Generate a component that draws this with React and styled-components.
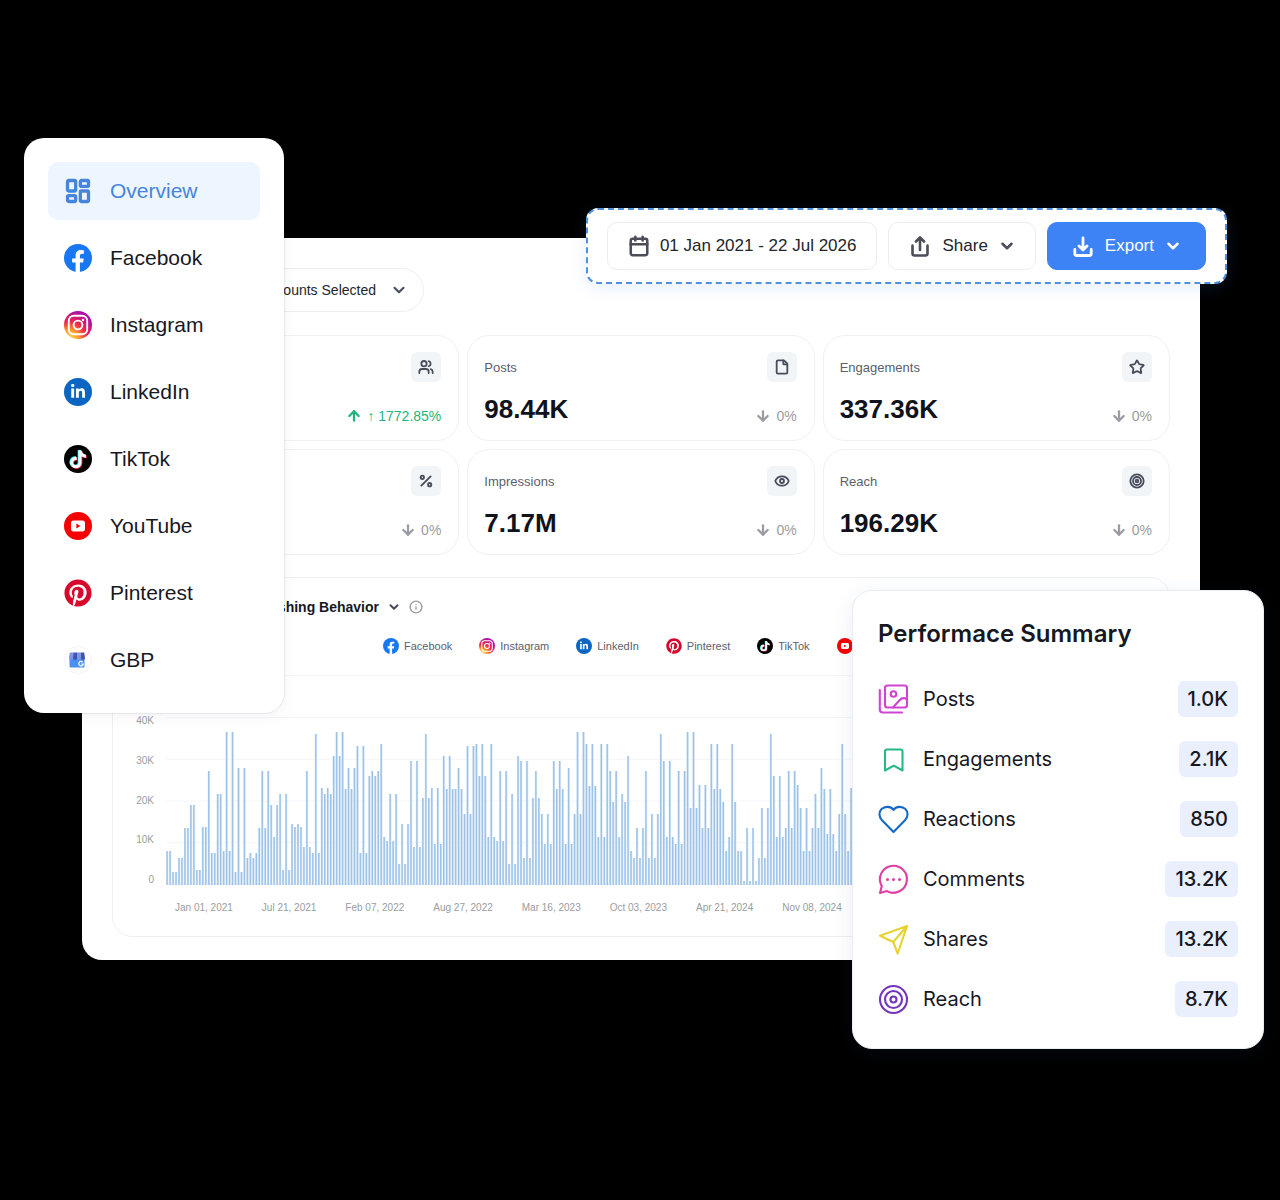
import React from 'react';
import styled, { createGlobalStyle, css } from 'styled-components';
import {
  ArrowDown,
  ArrowUp,
  Calendar,
  ChevronDown,
  Eye,
  File,
  Info,
  LayoutDashboard,
  Percent,
  Star,
  Target,
  Users,
} from 'lucide-react';
import { FaFacebookF, FaLinkedinIn, FaPinterest, FaTiktok } from 'react-icons/fa';

const GlobalStyle = createGlobalStyle`
  * { box-sizing: border-box; }
  body {
    margin: 0;
    background: #000;
    color: #17181f;
    font-family: 'Liberation Sans', Arial, sans-serif;
  }
  button { font-family: inherit; cursor: pointer; }
  svg { display: block; flex-shrink: 0; }
`;

const Page = styled.main`
  position: relative;
  padding: 238px 80px 240px 82px;
  overflow: hidden;
`;

const Dashboard = styled.section`
  padding: 30px 30px 23px;
  background: #fff;
  border-radius: 20px;
`;

const AccountSelect = styled.button`
  display: flex;
  align-items: center;
  justify-content: flex-end;
  gap: 14px;
  width: 312px;
  height: 44px;
  padding: 0 15px;
  border: 1px solid #eeeff1;
  border-radius: 22px;
  background: #fff;
  color: #23252d;
  font-size: 14px;
`;

const StatGrid = styled.div`
  display: grid;
  grid-template-columns: repeat(3, 1fr);
  gap: 8px;
  margin: 23px 0 22px;
`;

const StatCard = styled.article`
  display: flex;
  flex-direction: column;
  gap: 12px;
  padding: 16px 17px 16px 16px;
  border: 1px solid #f0f1f3;
  border-radius: 22px;
`;

const StatRow = styled.div`
  display: flex;
  align-items: ${(p) => p.$align || 'center'};
  justify-content: space-between;
  height: 30px;
`;

const StatLabel = styled.span`
  color: #5b606b;
  font-size: 13px;
`;

const StatValue = styled.strong`
  color: #10121c;
  font-size: 26px;
  line-height: 30px;
`;

const IconTile = styled.span`
  display: grid;
  place-items: center;
  width: 30px;
  height: 30px;
  border-radius: 6px;
  background: #f2f5f8;
  color: #474c5a;
`;

const Delta = styled.span`
  display: flex;
  align-items: center;
  gap: 5px;
  color: ${(p) => (p.$up ? '#1fb57c' : '#9a9ca2')};
  font-size: 14px;
  line-height: 16px;
`;

const ChartCard = styled.section`
  padding: 19px 0 21px;
  border: 1px solid #eeeff1;
  border-radius: 20px;
  overflow: hidden;
`;

const ChartHead = styled.div`
  display: flex;
  align-items: center;
  justify-content: flex-end;
  gap: 8px;
  width: 310px;
  height: 20px;
  color: #474c5a;
`;

const ChartTitle = styled.h2`
  margin: 0;
  color: #17181f;
  font-size: 14px;
  line-height: 20px;
`;

const Legend = styled.ul`
  display: flex;
  gap: 27px;
  margin: 20px 17px 0;
  padding: 0 0 20px 253px;
  border-bottom: 1px solid #f5f6f7;
  list-style: none;
`;

const LegendItem = styled.li`
  display: flex;
  align-items: center;
  gap: 5px;
  height: 18px;
  color: #5b606b;
  font-size: 11px;
`;

const PlotRow = styled.div`
  display: flex;
  gap: 12px;
  padding: 38px 17px 0 0;
`;

const YAxis = styled.div`
  display: flex;
  flex-direction: column;
  justify-content: space-between;
  width: 41px;
  height: 173px;
  color: #9a9ca2;
  font-size: 10px;
  line-height: 14px;
  text-align: right;
`;

const Plot = styled.svg`
  flex: 1;
  min-width: 0;
  height: 168px;
  margin-top: 3px;
`;

const XAxis = styled.div`
  display: flex;
  gap: 29px;
  margin-top: 14px;
  padding-left: 62px;
  color: #9a9ca2;
  font-size: 10px;
  line-height: 14px;
  white-space: nowrap;
`;

/* floating panels over the dashboard */

const Sidebar = styled.nav`
  position: absolute;
  top: 138px;
  left: 24px;
  display: flex;
  flex-direction: column;
  gap: 9px;
  width: 260px;
  padding: 24px;
  border-radius: 20px;
  background: #fff;
  box-shadow: 0 0 1px 1px rgba(30, 40, 60, 0.08), 0 4px 16px rgba(30, 40, 60, 0.05);
`;

const NavLink = styled.a`
  display: flex;
  align-items: center;
  gap: 18px;
  height: 58px;
  padding: 0 16px;
  border-radius: 10px;
  color: #17181f;
  font-size: 21px;
  text-decoration: none;
  ${(p) =>
    p.$active &&
    css`
      background: #edf5fe;
      color: #4784dc;
    `}
`;

const Toolbar = styled.div`
  position: absolute;
  top: 208px;
  right: 53px;
  display: flex;
  gap: 11px;
  padding: 12px 19px;
  border: 2px dashed #4f91dd;
  border-radius: 12px;
  background: #fff;
  box-shadow: 0 4px 16px rgba(62, 131, 245, 0.13);
`;

const ToolButton = styled.button`
  display: flex;
  align-items: center;
  gap: 10px;
  height: 48px;
  padding: 0 ${(p) => p.$pad || 19}px;
  border: 1px solid #ecedef;
  border-radius: 10px;
  background: #fff;
  color: #23252d;
  font-size: 17px;
  white-space: nowrap;
  svg { color: #4b4d57; }
  ${(p) =>
    p.$primary &&
    css`
      border-color: #3e83f5;
      background: #3e83f5;
      color: #fff;
      svg { color: #fff; }
    `}
`;

const Summary = styled.aside`
  position: absolute;
  top: 590px;
  right: 16px;
  width: 412px;
  padding: 28px 25px 31px;
  border: 1px solid #e9edf4;
  border-radius: 20px;
  background: #fff;
  box-shadow: 0 4px 20px rgba(50, 90, 170, 0.1);
  font-family: Inter, sans-serif;
`;

const SummaryTitle = styled.h2`
  margin: 0 0 32px;
  font-size: 24px;
  font-weight: 600;
  line-height: 30px;
`;

const SummaryList = styled.ul`
  display: flex;
  flex-direction: column;
  gap: 24px;
  margin: 0;
  padding: 0;
  list-style: none;
`;

const SummaryItem = styled.li`
  display: flex;
  align-items: center;
  gap: 15px;
  height: 36px;
  font-size: 20px;
`;

const Badge = styled.span`
  margin-left: auto;
  padding: 0 10px;
  border-radius: 6px;
  background: #e9effd;
  font-weight: 500;
  line-height: 36px;
`;

const brandShapes = {
  Facebook: (
    <>
      <circle cx="14" cy="14" r="14" fill="#1877f2" />
      <FaFacebookF x={3} y={6} size={22} color="#fff" />
    </>
  ),
  Instagram: (
    <>
      <defs>
        <radialGradient id="insta" cx="0.2" cy="1" r="1.1">
          <stop offset="0" stopColor="#ffdd55" />
          <stop offset="0.3" stopColor="#ff9a2e" />
          <stop offset="0.55" stopColor="#ee2a4b" />
          <stop offset="0.8" stopColor="#c4128c" />
          <stop offset="1" stopColor="#9b0fb8" />
        </radialGradient>
      </defs>
      <circle cx="14" cy="14" r="14" fill="url(#insta)" />
      <g fill="none" stroke="#fff" strokeWidth="1.9">
        <rect x="4.800" y="4.800" width="18.400" height="18.400" rx="5" />
        <circle cx="14" cy="14" r="4.400" />
      </g>
      <circle cx="19" cy="9" r="1.200" fill="#fff" />
    </>
  ),
  LinkedIn: (
    <>
      <circle cx="14" cy="14" r="14" fill="#0a66c2" />
      <FaLinkedinIn x={6} y={5.8} size={16} color="#fff" />
    </>
  ),
  TikTok: (
    <>
      <circle cx="14" cy="14" r="14" fill="#000" />
      <FaTiktok x={4.2} y={4.7} size={18} color="#25f4ee" />
      <FaTiktok x={5.800} y={5.900} size={18} color="#fe2c55" />
      <FaTiktok x={5} y={5.300} size={18} color="#fff" />
    </>
  ),
  YouTube: (
    <>
      <circle cx="14" cy="14" r="14" fill="#f60002" />
      <rect x="7" y="8.600" width="14" height="10.800" rx="2.600" fill="#fff" />
      <path d="M12.400 11.600v4.800l4-2.400z" fill="#f60002" />
    </>
  ),
  Pinterest: <FaPinterest size={28} color="#d7082c" />,
  GBP: (
    <>
      <circle cx="14" cy="14" r="13.500" fill="#fff" stroke="#f1f2f4" />
      <path d="M5.500 11h15v9.500a1 1 0 0 1-1 1h-13a1 1 0 0 1-1-1z" fill="#4a90f2" />
      <path d="M5.800 6.500h3.600l-.4 5.500a2 2 0 0 1-4 0z" fill="#7d95e6" />
      <path d="M9.400 6.500H13V12a2 2 0 0 1-4 0z" fill="#4153ad" />
      <path d="M13 6.500h3.600l.4 5.500a2 2 0 0 1-4 0z" fill="#7d95e6" />
      <path d="M16.600 6.500h3.600L21 12a2 2 0 0 1-4 0z" fill="#4153ad" />
      <path d="M18.700 16a2.300 2.300 0 1 0 .6 2h-2.100" fill="none" stroke="#fff" strokeWidth="1.200" />
    </>
  ),
};

const BrandIcon = ({ name, size }) => (
  <svg width={size} height={size} viewBox="0 0 28 28" aria-hidden="true">
    {brandShapes[name]}
  </svg>
);

const LineIcon = ({ size, box = 24, color = 'currentColor', width, children }) => (
  <svg
    width={size}
    height={size}
    viewBox={`0 0 ${box} ${box}`}
    fill="none"
    stroke={color}
    strokeWidth={width}
    strokeLinecap="round"
    strokeLinejoin="round"
    overflow="visible"
    aria-hidden="true"
  >
    {children}
  </svg>
);

const channels = ['Facebook', 'Instagram', 'LinkedIn', 'TikTok', 'YouTube', 'Pinterest', 'GBP'];

const legend = [
  { name: 'Facebook', label: 'Facebook' },
  { name: 'Instagram', label: 'Instagram' },
  { name: 'LinkedIn', label: 'LinkedIn' },
  { name: 'Pinterest', label: 'Pinterest' },
  { name: 'TikTok', label: 'TikTok' },
  { name: 'YouTube' },
];

const stats = [
  { id: 'followers', icon: Users, delta: '↑ 1772.85%', up: true },
  { id: 'posts', label: 'Posts', value: '98.44K', icon: File, delta: '0%' },
  { id: 'engagements', label: 'Engagements', value: '337.36K', icon: Star, delta: '0%' },
  { id: 'rate', icon: Percent, delta: '0%' },
  { id: 'impressions', label: 'Impressions', value: '7.17M', icon: Eye, delta: '0%' },
  { id: 'reach', label: 'Reach', value: '196.29K', icon: Target, delta: '0%' },
];

const yTicks = ['40K', '30K', '20K', '10K', '0'];
const xTicks = [
  'Jan 01, 2021',
  'Jul 21, 2021',
  'Feb 07, 2022',
  'Aug 27, 2022',
  'Mar 16, 2023',
  'Oct 03, 2023',
  'Apr 21, 2024',
  'Nov 08, 2024',
];

// bar heights, 167 is the 40K line
const bars = [
  34, 34, 13, 13, 27, 27, 57, 57, 80, 80, 15, 15, 58, 58, 114, 32, 32, 91, 91, 34,
  153, 34, 153, 13, 117, 13, 117, 27, 32, 27, 32, 57, 114, 57, 114, 80, 48, 80, 91, 15,
  91, 15, 61, 58, 61, 58, 38, 114, 38, 32, 151, 32, 97, 91, 97, 91, 129, 153, 129, 153,
  96, 117, 96, 117, 139, 32, 139, 32, 109, 114, 109, 114, 141, 48, 44, 91, 44, 91, 21, 61,
  21, 61, 124, 38, 124, 38, 87, 151, 87, 97, 41, 97, 41, 129, 96, 129, 96, 96, 117, 96,
  71, 139, 71, 139, 141, 109, 141, 109, 48, 141, 48, 44, 114, 44, 114, 21, 91, 21, 129, 124,
  27, 124, 27, 87, 114, 87, 71, 41, 71, 41, 124, 96, 124, 96, 41, 117, 41, 71, 153, 71,
  153, 141, 99, 141, 99, 48, 141, 48, 141, 114, 83, 114, 48, 91, 83, 129, 34, 27, 57, 27,
  57, 114, 27, 71, 27, 71, 151, 124, 48, 124, 48, 41, 114, 41, 114, 153, 77, 153, 77, 100,
  57, 100, 57, 141, 96, 141, 96, 83, 34, 48, 141, 83, 34, 34, 4, 57, 4, 57, 4, 27,
  77, 27, 77, 151, 109, 48, 109, 48, 57, 114, 57, 114, 100, 77, 34, 77, 34, 57, 91, 57,
  117, 96, 51, 96, 51, 34, 71, 141, 71, 34, 97,
];

const summary = [
  {
    label: 'Posts',
    value: '1.0K',
    color: '#cf45d1',
    shape: (
      <>
        <rect x="7" y="1.500" width="22" height="22" rx="2.500" />
        <path d="M1.800 6v19.500a3 3 0 0 0 3 3H24M15 23.500l6.500-7.200c2.200-2.400 5-2.600 7.500-1" />
        <circle cx="15.500" cy="10" r="2.800" />
      </>
    ),
  },
  {
    label: 'Engagements',
    value: '2.1K',
    color: '#27b888',
    shape: <path d="M7 26.500V7.500a2 2 0 0 1 2-2h13.500a2 2 0 0 1 2 2v19l-8.700-4.800z" />,
  },
  {
    label: 'Reactions',
    value: '850',
    color: '#1668c8',
    shape: (
      <path d="M15.500 28 4 16.300C.8 12.800.6 8.100 3.600 5.100c3.400-3.300 9.300-2.900 11.900.7 2.600-3.600 8.500-4 11.900-.7 3 3 2.800 7.700-.4 11.200z" />
    ),
  },
  {
    label: 'Comments',
    value: '13.2K',
    color: '#df3fa2',
    shape: (
      <>
        <path d="M3.800 22.100A13.500 13.500 0 1 1 9 27.100L2 29z" />
        <path d="M9.500 15.500h.01M15.500 15.500h.01M21.500 15.500h.01" strokeWidth="3" />
      </>
    ),
  },
  {
    label: 'Shares',
    value: '13.2K',
    color: '#e8d22f',
    shape: <path d="M29 2 2 11.700l13.300 6.300L19.700 29.500zL15.300 18" />,
  },
  {
    label: 'Reach',
    value: '8.7K',
    color: '#7335c0',
    shape: (
      <>
        <circle cx="15.500" cy="15.500" r="13.500" />
        <circle cx="15.500" cy="15.500" r="8.500" />
        <circle cx="15.500" cy="15.500" r="3" />
      </>
    ),
  },
];

const Stat = ({ label, value, icon: Icon, delta, up }) => (
  <StatCard>
    <StatRow>
      <StatLabel>{label}</StatLabel>
      <IconTile>
        <Icon size={16} strokeWidth={2.7} />
      </IconTile>
    </StatRow>
    <StatRow $align="flex-end">
      <StatValue>{value}</StatValue>
      <Delta $up={up}>
        {up ? <ArrowUp size={16} strokeWidth={3.4} /> : <ArrowDown size={16} strokeWidth={3.4} />}
        {delta}
      </Delta>
    </StatRow>
  </StatCard>
);

const Chart = () => (
  <ChartCard>
    <ChartHead>
      <ChartTitle>Publishing Behavior</ChartTitle>
      <ChevronDown size={14} strokeWidth={3.4} />
      <Info size={14} strokeWidth={2.4} color="#9a9ca2" />
    </ChartHead>
    <Legend>
      {legend.map((item) => (
        <LegendItem key={item.name}>
          <BrandIcon name={item.name} size={16} />
          {item.label}
        </LegendItem>
      ))}
    </Legend>
    <PlotRow>
      <YAxis>
        {yTicks.map((tick) => (
          <span key={tick}>{tick}</span>
        ))}
      </YAxis>
      <Plot role="img" aria-label="Publishing behavior over time">
        {yTicks.map((tick, i) => (
          <line key={tick} x1="0" x2="100%" y1={0.5 + i * 41.75} y2={0.5 + i * 41.75} stroke="#f3f5f7" />
        ))}
        {bars.map((h, i) => (
          <g key={i}>
            <rect x={i * 2.974} y={168 - h} width="2.400" height={h} fill="#dcebf9" />
            <rect x={0.4 + i * 2.974} y={168 - h} width="1.400" height={h} fill="#9dc2e6" />
          </g>
        ))}
      </Plot>
    </PlotRow>
    <XAxis>
      {xTicks.map((tick) => (
        <span key={tick}>{tick}</span>
      ))}
    </XAxis>
  </ChartCard>
);

const App = () => {
  return (
    <Page>
      <GlobalStyle />
      <Dashboard>
        <AccountSelect type="button">
          Accounts Selected
          <ChevronDown size={18} strokeWidth={2.8} color="#474c5a" />
        </AccountSelect>
        <StatGrid>
          {stats.map((item) => (
            <Stat key={item.id} {...item} />
          ))}
        </StatGrid>
        <Chart />
      </Dashboard>

      <Sidebar>
        <NavLink href="#overview" $active>
          <LayoutDashboard size={28} strokeWidth={2.8} />
          Overview
        </NavLink>
        {channels.map((name) => (
          <NavLink key={name} href={`#${name.toLowerCase()}`}>
            <BrandIcon name={name} size={28} />
            {name}
          </NavLink>
        ))}
      </Sidebar>

      <Toolbar>
        <ToolButton type="button" $pad={20}>
          <Calendar size={22} strokeWidth={2.8} />
          01 Jan 2021 - 22 Jul 2026
        </ToolButton>
        <ToolButton type="button">
          <LineIcon size={24} width={2.6}>
            <path d="M4.500 11.500v8a2 2 0 0 0 2 2h11a2 2 0 0 0 2-2v-8M12 16V3.500M8 7.500l4-4 4 4" />
          </LineIcon>
          Share
          <ChevronDown size={18} strokeWidth={3.4} />
        </ToolButton>
        <ToolButton type="button" $primary $pad={23}>
          <LineIcon size={24} width={2.8}>
            <path d="M3.800 15.500v4a2 2 0 0 0 2 2h12.400a2 2 0 0 0 2-2v-4M12 4v12M8 12l4 4 4-4" />
          </LineIcon>
          Export
          <ChevronDown size={18} strokeWidth={3.4} />
        </ToolButton>
      </Toolbar>

      <Summary>
        <SummaryTitle>Performace Summary</SummaryTitle>
        <SummaryList>
          {summary.map((item) => (
            <SummaryItem key={item.label}>
              <LineIcon size={30} box={30} width={2.1} color={item.color}>
                {item.shape}
              </LineIcon>
              {item.label}
              <Badge>{item.value}</Badge>
            </SummaryItem>
          ))}
        </SummaryList>
      </Summary>
    </Page>
  );
};

export default App;
